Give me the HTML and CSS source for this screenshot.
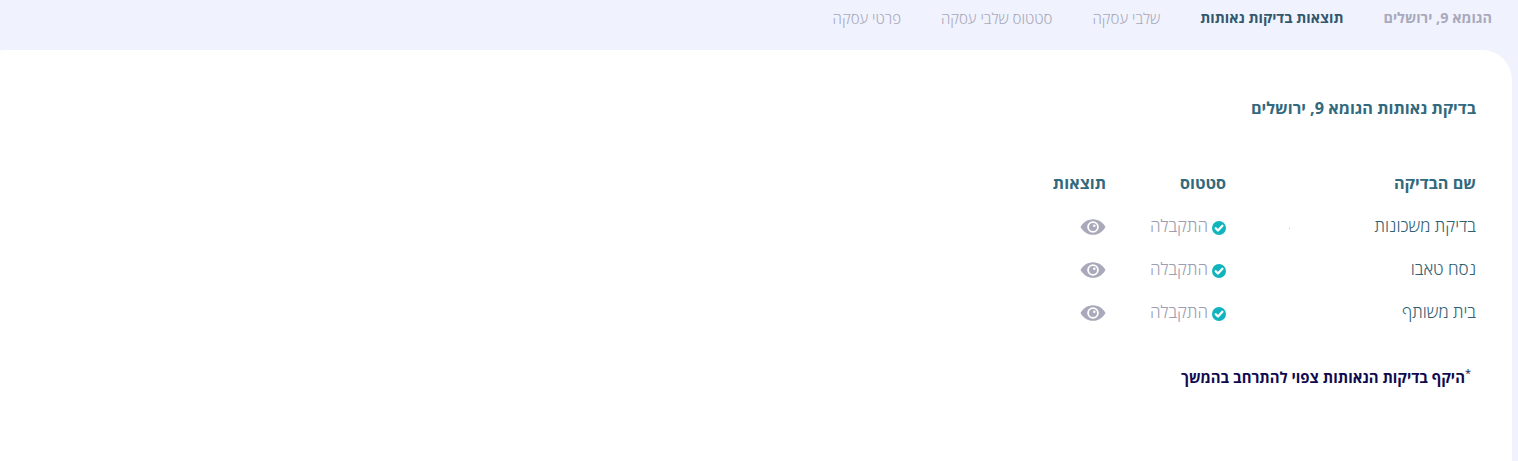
FILE: index.html
```
<!DOCTYPE html>
<html lang="he" dir="rtl">
<head>
<meta charset="utf-8">
<title>בדיקת נאותות</title>
<link rel="stylesheet" href="styles.css">
</head>
<body>
<svg class="defs" width="0" height="0" aria-hidden="true">
  <symbol id="eye" viewBox="0 0 26 18">
    <path fill="#a9a9bb" d="M13 1.200C7.200 1.200 2.800 4.800 0.500 9 2.800 13.200 7.200 16.800 13 16.800S23.200 13.200 25.500 9C23.200 4.800 18.800 1.200 13 1.200Z"/>
    <circle cx="13" cy="9" r="5.800" fill="#fff"/>
    <circle cx="13" cy="9" r="4" fill="#a9a9bb"/>
    <circle cx="14.300" cy="7.700" r="1.300" fill="#fff"/>
  </symbol>
  <symbol id="check" viewBox="0 0 14 14">
    <circle cx="7" cy="7" r="7" fill="#10b4bd"/>
    <path fill="none" stroke="#fff" stroke-width="2.300" stroke-linecap="round" stroke-linejoin="round" d="M3.700 7.200 6 9.500 10.400 4.800"/>
  </symbol>
</svg>
<nav class="steps">
  <span class="step step-address">הגומא 9, ירושלים</span>
  <span class="step step-active">תוצאות בדיקות נאותות</span>
  <span class="step">שלבי עסקה</span>
  <span class="step">סטטוס שלבי עסקה</span>
  <span class="step">פרטי עסקה</span>
</nav>
<main class="card">
  <h1 class="title">בדיקת נאותות הגומא 9, ירושלים</h1>
  <div class="table">
    <div class="head">שם הבדיקה</div>
    <div class="head">סטטוס</div>
    <div class="head">תוצאות</div>

    <div class="name">בדיקת משכונות<i class="speck"></i></div>
    <div class="status"><svg class="check"><use href="#check"/></svg><span>התקבלה</span></div>
    <div class="result"><svg class="eye"><use href="#eye"/></svg></div>

    <div class="name">נסח טאבו</div>
    <div class="status"><svg class="check"><use href="#check"/></svg><span>התקבלה</span></div>
    <div class="result"><svg class="eye"><use href="#eye"/></svg></div>

    <div class="name">בית משותף</div>
    <div class="status"><svg class="check"><use href="#check"/></svg><span>התקבלה</span></div>
    <div class="result"><svg class="eye"><use href="#eye"/></svg></div>
  </div>
  <p class="note"><sup class="star">*</sup>היקף בדיקות הנאותות צפוי להתרחב בהמשך</p>
</main>
</body>
</html>
```
FILE: styles.css
```
* { box-sizing: border-box; }
html, body { margin: 0; height: 100%; }
body {
  background: #f0f3fe;
  font-family: "Open Sans", "Liberation Sans", sans-serif;
  overflow: hidden;
  display: flex;
  flex-direction: column;
}
.defs { position: absolute; }
.steps {
  height: 50px;
  padding: 9px 26px 0 0;
  display: flex;
  gap: 40px;
  font-size: 15px;
  line-height: 18px;
  font-weight: 300;
  color: #a9a9bb;
}
.step-address { font-size: 14.400px; font-weight: 700; }
.step-active { font-size: 14.400px; font-weight: 700; color: #33586d; }
.card {
  flex: 1;
  margin: 0 6px 0 -24px;
  padding: 46px 36px 0 0;
  background: #fff;
  border-radius: 30px 30px 0 0;
}
.title {
  margin: 0;
  font-size: 16.200px;
  line-height: 24px;
  font-weight: 700;
  color: #33697d;
}
.table {
  margin-top: 41px;
  display: grid;
  grid-template-columns: 250px 120px auto;
  grid-auto-rows: 43px;
  align-items: center;
  justify-content: start;
}
.head {
  font-size: 16.200px;
  font-weight: 700;
  color: #33697d;
}
.name {
  position: relative;
  font-size: 17px;
  font-weight: 300;
  color: #2f6173;
}
.speck {
  position: absolute;
  right: 186px;
  top: 14px;
  width: 1px;
  height: 1px;
  background: #b9c6cd;
}
.status {
  display: flex;
  align-items: center;
  gap: 4px;
  font-size: 17px;
  font-weight: 300;
  color: #9d9db1;
}
.check { width: 14px; height: 14px; margin-top: 4px; }
.result { display: flex; }
.eye { width: 26px; height: 18px; margin-top: 2px; }
.note {
  margin: 34px 5px 0 0;
  font-size: 14.900px;
  line-height: 20px;
  font-weight: 700;
  color: #0f0a4e;
}
.star { font-size: 11px; font-weight: 400; line-height: 0; }
```
